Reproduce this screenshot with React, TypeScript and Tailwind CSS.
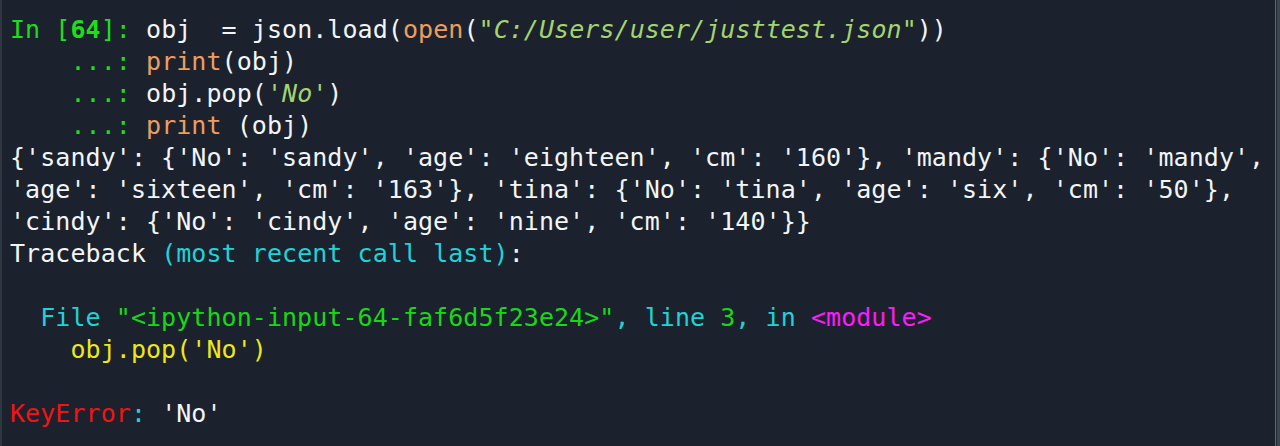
import React from "react";

const G = "text-[#1bdf1b]";
const O = "text-[#ed9d5e]";
const S = "text-[#a3d46e] italic";
const C = "text-[#1fd3d8]";

const Line = ({ children }: { children?: React.ReactNode }) => (
  <div className="h-[32px] leading-[32px] whitespace-pre">{children ?? " "}</div>
);

export default function App() {
  return (
    <div className="flex h-[446px] w-[1280px] bg-[#1b222d]">
      <div className="w-[2px] bg-[#2d3641]" />
      <div
        className="flex-1 pl-[8px] pt-[14px] text-[25px] tracking-[0.06px] text-[#f2f5f7] overflow-hidden"
        style={{ fontFamily: '"DejaVu Sans Mono", "Liberation Mono", monospace' }}
      >
        <Line>
          <span className={G}>In [</span>
          <span className={`${G} font-bold`}>64</span>
          <span className={G}>]: </span>
          obj  = json.load(<span className={O}>open</span>(
          <span className={S}>"C:/Users/user/justtest.json"</span>))
        </Line>
        <Line>
          <span className={G}>    ...: </span>
          <span className={O}>print</span>(obj)
        </Line>
        <Line>
          <span className={G}>    ...: </span>
          obj.pop(<span className={S}>'No'</span>)
        </Line>
        <Line>
          <span className={G}>    ...: </span>
          <span className={O}>print</span> (obj)
        </Line>
        <Line>{"{'sandy': {'No': 'sandy', 'age': 'eighteen', 'cm': '160'}, 'mandy': {'No': 'mandy',"}</Line>
        <Line>{"'age': 'sixteen', 'cm': '163'}, 'tina': {'No': 'tina', 'age': 'six', 'cm': '50'},"}</Line>
        <Line>{"'cindy': {'No': 'cindy', 'age': 'nine', 'cm': '140'}}"}</Line>
        <Line>
          Traceback <span className={C}>(most recent call last)</span>:
        </Line>
        <Line />
        <Line>
          <span className={C}>  File </span>
          <span className="text-[#16d916]">"&lt;ipython-input-64-faf6d5f23e24&gt;"</span>
          <span className={C}>, line </span>
          <span className="text-[#16d916]">3</span>
          <span className={C}>, in </span>
          <span className="text-[#ff19ff]">&lt;module&gt;</span>
        </Line>
        <Line>
          <span className="text-[#ece81a]">    obj.pop('No')</span>
        </Line>
        <Line />
        <Line>
          <span className="text-[#f01515]">KeyError</span>
          <span className={C}>: </span>
          'No'
        </Line>
      </div>
      <div className="flex w-[6px]">
        <div className="w-[1px] bg-[#1b222d]" />
        <div className="w-[1px] bg-[#5d6773]" />
        <div className="w-[1px] bg-[#232b36]" />
        <div className="w-[3px] bg-[#3b4551]" />
      </div>
    </div>
  );
}
